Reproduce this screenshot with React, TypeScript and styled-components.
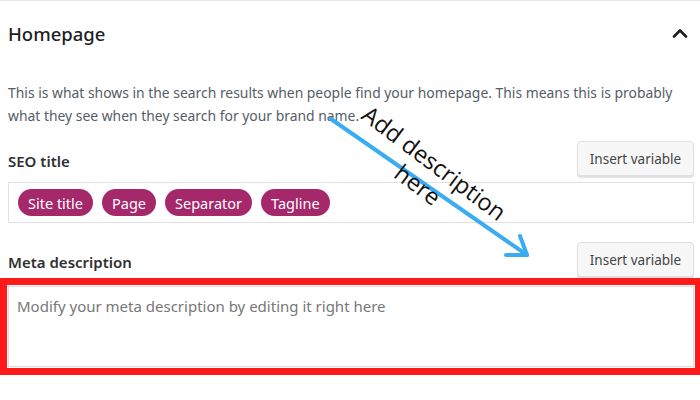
import styled, { createGlobalStyle } from "styled-components";

const GlobalStyle = createGlobalStyle`
    html, body {
        margin: 0;
        padding: 0;
        background: #ffffff;
    }
    body {
        font-family: "Noto Sans", "Open Sans", sans-serif;
        color: #1e1e1e;
    }
`;

const Panel = styled.section`
    position: relative;
    width: 700px;
    height: 400px;
    box-sizing: border-box;
    border-top: 1px solid #e2e4e7;
    padding: 0 6px 0 8px;
    overflow: hidden;
`;

const Header = styled.div`
    display: flex;
    align-items: center;
    justify-content: space-between;
    height: 64px;
`;

const Heading = styled.h2`
    margin: 0;
    font-size: 18.5px;
    font-weight: 500;
    color: #1e1e1e;
`;

const Toggle = styled.button`
    display: flex;
    align-items: center;
    justify-content: center;
    width: 24px;
    height: 24px;
    margin-right: 2px;
    padding: 0;
    border: none;
    background: transparent;
    color: #1e1e1e;
`;

const Intro = styled.p`
    max-width: 672px;
    margin: 16px 0 14px;
    font-size: 13.9px;
    line-height: 23px;
    color: #555d66;
`;

const FieldRow = styled.div<{ $gap?: number }>`
    display: flex;
    align-items: flex-end;
    justify-content: space-between;
    margin-top: ${p => p.$gap ?? 0}px;
`;

const Label = styled.label`
    font-size: 15px;
    font-weight: 600;
    color: #303030;
    padding-bottom: 5px;
`;

const InsertButton = styled.button`
    height: 35px;
    width: 117px;
    box-sizing: border-box;
    border: 1px solid #e0e0e0;
    border-radius: 4px;
    background: #f7f7f7;
    box-shadow: 0 2px 1px rgba(0, 0, 0, 0.12);
    font-family: inherit;
    font-size: 13.5px;
    color: #444;
    padding: 0;
`;

const TagInput = styled.div`
    display: flex;
    align-items: center;
    gap: 9px;
    height: 41px;
    box-sizing: border-box;
    margin-top: 6px;
    padding: 0 9px;
    border: 1px solid #e1e1e1;
    background: #fff;
`;

const Tag = styled.span`
    display: inline-flex;
    align-items: center;
    height: 27px;
    padding: 0 10px;
    border-radius: 14px;
    background: #a4286a;
    color: #fff;
    font-size: 14.5px;
`;

const DescriptionBox = styled.textarea`
    display: block;
    width: 100%;
    height: 81px;
    box-sizing: border-box;
    margin-top: 9px;
    padding: 9px 8px;
    border: 1px solid #dcdcdc;
    resize: none;
    font-family: inherit;
    font-size: 15px;
    color: #333;
    outline: 7px solid #ff1a1a;
    outline-offset: 1px;

    &::placeholder {
        color: #777;
    }
`;

const Annotation = styled.div`
    position: absolute;
    left: 0;
    top: 0;
    width: 700px;
    height: 400px;
    pointer-events: none;
`;

const Note = styled.div`
    position: absolute;
    left: 326px;
    top: 146px;
    width: 200px;
    text-align: center;
    transform: rotate(37deg);
    transform-origin: center;
    font-family: "Open Sans", "Noto Sans", sans-serif;
    font-size: 23.5px;
    line-height: 27px;
    color: #111;
`;

const ChevronUp = () => (
    <svg width="16" height="10" viewBox="0 0 16 10">
        <path d="M2 8.5 L8 2.5 L14 8.5" fill="none" stroke="currentColor" strokeWidth="2.6" strokeLinecap="round" strokeLinejoin="round" />
    </svg>
);

const Arrow = () => (
    <svg width="700" height="400" viewBox="0 0 700 400" style={{ position: "absolute", left: 0, top: 0 }}>
        <g stroke="#3aadf2" strokeWidth="4" strokeLinecap="round" fill="none">
            <path d="M331 118 L527 254" />
            <path d="M520 235 L527 254 L506 254" strokeLinejoin="round" />
        </g>
    </svg>
);

const tags = ["Site title", "Page", "Separator", "Tagline"];

export default function App() {
    return (
        <>
            <GlobalStyle />
            <Panel>
                <Header>
                    <Heading>Homepage</Heading>
                    <Toggle aria-label="Collapse">
                        <ChevronUp />
                    </Toggle>
                </Header>
                <Intro>
                    This is what shows in the search results when people find your homepage. This means this is probably what they see when they search for your brand name.
                </Intro>
                <FieldRow>
                    <Label>SEO title</Label>
                    <InsertButton>Insert variable</InsertButton>
                </FieldRow>
                <TagInput>
                    {tags.map(t => (
                        <Tag key={t}>{t}</Tag>
                    ))}
                </TagInput>
                <FieldRow $gap={19}>
                    <Label>Meta description</Label>
                    <InsertButton>Insert variable</InsertButton>
                </FieldRow>
                <DescriptionBox placeholder="Modify your meta description by editing it right here" />
                <Annotation>
                    <Arrow />
                    <Note>
                        Add description
                        <br />
                        here
                    </Note>
                </Annotation>
            </Panel>
        </>
    );
}
